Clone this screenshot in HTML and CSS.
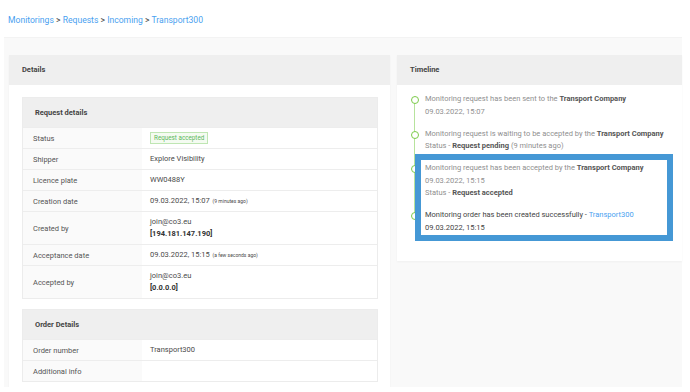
FILE: index.html
```html
<!DOCTYPE html>
<html lang="en">
<head>
    <meta charset="UTF-8">
    <title>Transport300</title>
    <link rel="stylesheet" href="styles.css">
</head>
<body>

    <!-- Breadcrumbs -->
    <div class="breadcrumbs">
        <a href="#">Monitorings</a> &gt; <a href="#">Requests</a> &gt; <a href="#">Incoming</a> &gt; <a href="#">Transport300</a>
    </div>

    <div class="page">

        <!-- Details -->
        <div class="card">
            <div class="card-header">Details</div>
            <div class="card-body">

                <div class="box">
                    <div class="box-header">Request details</div>
                    <div class="row">
                        <div class="label">Status</div>
                        <div class="value"><span><span class="badge">Request accepted</span></span></div>
                    </div>
                    <div class="row">
                        <div class="label">Shipper</div>
                        <div class="value"><span>Explore Visibility</span></div>
                    </div>
                    <div class="row">
                        <div class="label">Licence plate</div>
                        <div class="value"><span>WW0488Y</span></div>
                    </div>
                    <div class="row">
                        <div class="label">Creation date</div>
                        <div class="value"><span>09.03.2022, 15:07 <small>(9 minutes ago)</small></span></div>
                    </div>
                    <div class="row">
                        <div class="label">Created by</div>
                        <div class="value"><span>join@co3.eu<br><b>[194.181.147.190]</b></span></div>
                    </div>
                    <div class="row">
                        <div class="label">Acceptance date</div>
                        <div class="value"><span>09.03.2022, 15:15 <small>(a few seconds ago)</small></span></div>
                    </div>
                    <div class="row">
                        <div class="label">Accepted by</div>
                        <div class="value"><span>join@co3.eu<br><b>[0.0.0.0]</b></span></div>
                    </div>
                </div>

                <div class="box">
                    <div class="box-header">Order Details</div>
                    <div class="row">
                        <div class="label">Order number</div>
                        <div class="value"><span>Transport300</span></div>
                    </div>
                    <div class="row">
                        <div class="label">Additional info</div>
                        <div class="value"></div>
                    </div>
                </div>

            </div>
        </div>

        <!-- Timeline -->
        <div class="card card-timeline">
            <div class="card-header">Timeline</div>
            <div class="card-body timeline-body">
                <ul class="timeline">
                    <li>
                        Monitoring request has been sent to the <b>Transport Company</b><br>
                        09.03.2022, 15:07
                    </li>
                    <li>
                        Monitoring request is waiting to be accepted by the <b>Transport Company</b><br>
                        Status - <b>Request pending</b> (9 minutes ago)
                    </li>
                    <li>
                        Monitoring request has been accepted by the <b>Transport Company</b><br>
                        09.03.2022, 15:15<br>
                        Status - <b>Request accepted</b>
                    </li>
                    <li class="current">
                        Monitoring order has been created successfully - <a href="#">Transport300</a><br>
                        09.03.2022, 15:15
                    </li>
                </ul>
                <!-- highlight frame over the last two entries -->
                <div class="highlight"></div>
            </div>
        </div>

    </div>

</body>
</html>
```

FILE: styles.css
```css
* {
    box-sizing: border-box;
    margin: 0;
    padding: 0;
}

body {
    font-family: Roboto, "Liberation Sans", sans-serif;
    font-size: 7.5px;
    color: #444;
    background: #fff;
}

a {
    color: #4a9ff0;
    text-decoration: none;
}

/* Breadcrumbs */
.breadcrumbs {
    font-size: 8.6px;
    color: #444;
    padding: 15px 8px 0;
    height: 37px;
}

/* Gray page area */
.page {
    display: grid;
    grid-template-columns: 381px 285px;
    column-gap: 7px;
    align-items: start;
    margin: 0 8px 0 4px;
    padding: 17px 0 2px 5px;
    background: #f9f9f9;
    border-top: 1px solid #f3f3f3;
    height: 350px;
}

/* Cards */
.card {
    background: #fff;
    box-shadow: 0 1px 2px rgba(0, 0, 0, 0.04);
}

.card-header {
    height: 30px;
    line-height: 30px;
    padding: 0 13px;
    background: #efefef;
    font-weight: bold;
    color: #444;
}

.card-body {
    padding: 12px 12px 3px 13px;
}

/* Inner boxes with rows */
.box {
    border: 1px solid #ececec;
    margin-bottom: 10px;
}

.box-header {
    height: 29px;
    line-height: 29px;
    padding: 0 12px;
    background: #efefef;
    font-weight: bold;
    color: #444;
}

.row {
    display: grid;
    grid-template-columns: 119px 1fr;
    border-top: 1px solid #ededed;
    min-height: 21px;
}

.label {
    display: flex;
    align-items: center;
    padding: 0 10px;
    background: #fafafa;
    color: #555;
}

.value {
    display: flex;
    align-items: center;
    padding: 4px 8px;
    line-height: 12px;
    color: #4a4a4a;
}

.value small {
    font-size: 5px;
    margin-left: 1px;
}

.value b {
    font-weight: bold;
    color: #333;
}

.badge {
    display: inline-block;
    font-size: 6.3px;
    color: #5cb85c;
    background: #f4fbf1;
    border: 1px solid #bfe6b3;
    padding: 1px 3px;
    line-height: 8px;
    vertical-align: middle;
}

/* Timeline */
.timeline-body {
    position: relative;
    padding: 8px 10px 27px 14px;
}

.timeline {
    list-style: none;
    position: relative;
    padding-left: 14px;
}

.timeline::before {
    content: "";
    position: absolute;
    left: 2.5px;
    top: 7px;
    bottom: 18px;
    width: 1px;
    background: #b7e39d;
}

.timeline li {
    position: relative;
    line-height: 12.5px;
    color: #8f8f8f;
    margin-bottom: 9.5px;
}

.timeline li:last-child {
    margin-bottom: 0;
}

.timeline li::before {
    content: "";
    position: absolute;
    left: -14px;
    top: 3px;
    width: 6px;
    height: 6px;
    border-radius: 50%;
    border: 1.5px solid #7ccb4a;
    background: #fff;
}

.timeline li b {
    color: #555;
}

.timeline li.current {
    color: #444;
}

.highlight {
    position: absolute;
    left: 18px;
    top: 69px;
    width: 258px;
    height: 87px;
    border: 6px solid #4598d5;
}
```
